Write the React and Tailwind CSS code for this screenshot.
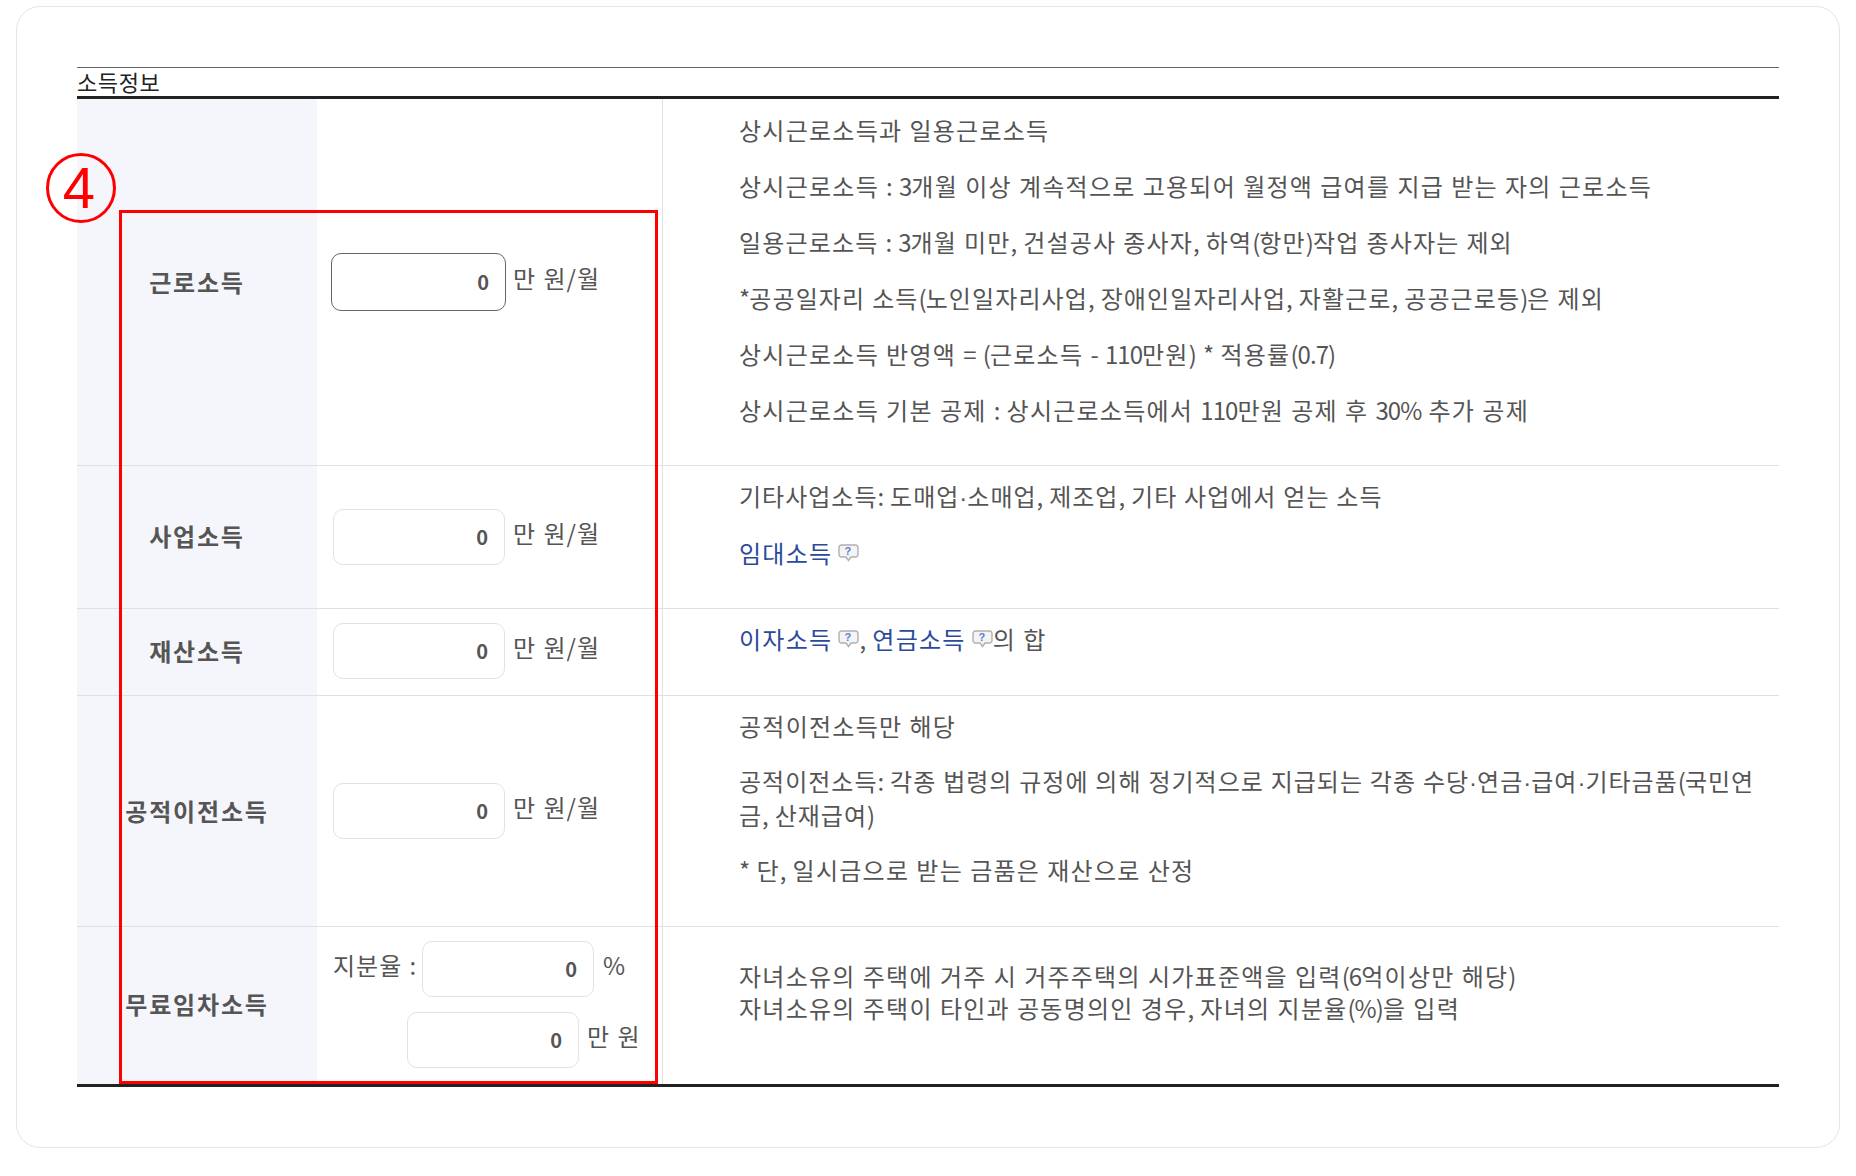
const font = { fontFamily: '"Noto Sans CJK KR", sans-serif' };

// Latin and punctuation run narrower than hangul in the reference
function Txt({ children }) {
  return children.split(/([^\uAC00-\uD7A3\s]+)/).map((part, i) => {
    if (i % 2 === 0) return part;
    if (part === '·') {
      return <span key={i} className="tracking-normal" style={{ fontFamily: '"Liberation Sans", sans-serif' }}>·</span>;
    }
    return <span key={i} className="tracking-[-0.95px]">{part}</span>;
  });
}

function HelpIcon() {
  return (
    <svg width="21" height="18" viewBox="0 0 21 18" className="inline-block align-[1px] -ml-[1px]">
      <path d="M3.5 1h14a2.5 2.5 0 0 1 2.5 2.5v7a2.5 2.5 0 0 1-2.5 2.5h-4.5l-2.5 3.5-2.5-3.5h-4.5a2.5 2.5 0 0 1-2.5-2.5v-7a2.5 2.5 0 0 1 2.5-2.5z" fill="#f4f4f4" stroke="#b0b0b0" strokeWidth="1.4" />
      <text x="10.5" y="11" textAnchor="middle" fontSize="11" fontWeight="700" fill="#5b7fd6" fontFamily="Liberation Sans, sans-serif">?</text>
    </svg>
  );
}

function Field({ focused, className = '' }) {
  return (
    <div
      className={`flex items-center justify-end pr-[16px] rounded-[10px] border bg-white text-[20px] font-bold text-[#555] ${focused ? 'w-[175px] h-[58px] border-[#666] -ml-[1px]' : 'w-[172px] h-[56px] border-[#e2e2e2]'} ${className}`}
    >
      0
    </div>
  );
}

function Unit({ children, className = '' }) {
  return <span className={`text-[24px] leading-[32px] tracking-[1px] [word-spacing:1px] text-[#555] -translate-y-[4px] ${className}`}>{children}</span>;
}

function Link({ children }) {
  return <span className="text-[#2b4a9b]">{children}</span>;
}

function Row({ label, height, last, labelClass = '', fieldClass = '', children, notes }) {
  return (
    <div className={`flex ${height} ${last ? '' : 'border-b border-[#e0e0e0]'}`}>
      <div className={`w-[240px] shrink-0 bg-[#f5f6fc] flex items-center justify-center text-[24px] font-bold tracking-[1.8px] text-[#555] ${labelClass}`}>{label}</div>
      <div className={`w-[346px] shrink-0 border-r border-[#e0e0e0] pl-[15px] flex flex-col justify-center ${fieldClass}`}>{children}</div>
      <div className="flex-1 pl-[76px] text-[24px] leading-[32px] text-[#555] tracking-[1.25px] [word-spacing:0.5px]">{notes}</div>
    </div>
  );
}

export default function App() {
  return (
    <div className="w-[1856px] h-[1176px] bg-white pt-[6px] pl-[16px]" style={font}>
      <div className="relative w-[1824px] h-[1142px] border border-[#e5e5e5] rounded-[24px] pt-[60px] pl-[60px]">
        <div className="w-[1702px]">
          <div className="border-t border-[#666] h-[29px] text-[22px] leading-[26px] tracking-[0.6px] text-[#222]">소득정보</div>
          <div className="border-y-[3px] border-[#222]">
            <Row
              label="근로소득"
              height="h-[367px]"
              notes={
                <div className="pt-[15px] flex flex-col gap-[24px]">
                  <p><Txt>상시근로소득과 일용근로소득</Txt></p>
                  <p><Txt>상시근로소득 : 3개월 이상 계속적으로 고용되어 월정액 급여를 지급 받는 자의 근로소득</Txt></p>
                  <p className="tracking-[1.15px]"><Txt>일용근로소득 : 3개월 미만, 건설공사 종사자, 하역(항만)작업 종사자는 제외</Txt></p>
                  <p className="tracking-[1.1px]"><Txt>*공공일자리 소득(노인일자리사업, 장애인일자리사업, 자활근로, 공공근로등)은 제외</Txt></p>
                  <p><Txt>상시근로소득 반영액 = (근로소득 - 110만원) * 적용률(0.7)</Txt></p>
                  <p><Txt>상시근로소득 기본 공제 : 상시근로소득에서 110만원 공제 후 30% 추가 공제</Txt></p>
                </div>
              }
            >
              <div className="flex items-center gap-[7px]">
                <Field focused />
                <Unit>만 원/월</Unit>
              </div>
            </Row>
            <Row
              label="사업소득"
              height="h-[143px]"
              labelClass="pb-[2px]"
              fieldClass="pb-[1px]"
              notes={
                <div className="pt-[14px] flex flex-col gap-[23px]">
                  <p className="tracking-[1px]"><Txt>기타사업소득: 도매업·소매업, 제조업, 기타 사업에서 얻는 소득</Txt></p>
                  <p><Link>임대소득</Link> <HelpIcon /></p>
                </div>
              }
            >
              <div className="flex items-center gap-[8px] pl-[1px]">
                <Field />
                <Unit>만 원/월</Unit>
              </div>
            </Row>
            <Row
              label="재산소득"
              height="h-[87px]"
              labelClass="pb-[3px]"
              fieldClass="pb-[2px]"
              notes={
                <p className="pt-[14px]">
                  <Link>이자소득</Link> <HelpIcon /><Txt>, </Txt><Link>연금소득</Link> <HelpIcon />의 합
                </p>
              }
            >
              <div className="flex items-center gap-[8px] pl-[1px]">
                <Field />
                <Unit>만 원/월</Unit>
              </div>
            </Row>
            <Row
              label="공적이전소득"
              height="h-[231px]"
              labelClass="pb-[1px]"
              notes={
                <div className="pt-[14px] flex flex-col gap-[23px]">
                  <p><Txt>공적이전소득만 해당</Txt></p>
                  <p className="tracking-[1px]"><Txt>공적이전소득: 각종 법령의 규정에 의해 정기적으로 지급되는 각종 수당·연금·급여·기타금품(국민연</Txt><br /><Txt>금, 산재급여)</Txt></p>
                  <p><Txt>* 단, 일시금으로 받는 금품은 재산으로 산정</Txt></p>
                </div>
              }
            >
              <div className="flex items-center gap-[8px] pl-[1px]">
                <Field />
                <Unit>만 원/월</Unit>
              </div>
            </Row>
            <Row
              label="무료임차소득"
              height="h-[157px]"
              labelClass="pb-[3px]"
              last
              notes={
                <div className="pt-[33px]">
                  <p><Txt>자녀소유의 주택에 거주 시 거주주택의 시가표준액을 입력(6억이상만 해당)</Txt></p>
                  <p><Txt>자녀소유의 주택이 타인과 공동명의인 경우, 자녀의 지분율(%)을 입력</Txt></p>
                </div>
              }
            >
              <div className="flex flex-col gap-[15px] -translate-y-[1px]">
                <div className="flex items-center pl-[1px]">
                  <Unit className="w-[89px]">지분율 :</Unit>
                  <Field />
                  <Unit className="ml-[9px] tracking-normal">%</Unit>
                </div>
                <div className="flex items-center pl-[75px]">
                  <Field />
                  <Unit className="ml-[8px]">만 원</Unit>
                </div>
              </div>
            </Row>
          </div>
        </div>

        {/* callout overlay */}
        <div className="absolute left-[29px] top-[146px] w-[70px] h-[70px] rounded-full border-[3px] border-[#f00] flex items-center justify-center pr-[4px] text-[58px] leading-none text-[#f00]" style={{ fontFamily: '"Liberation Sans", sans-serif' }}>4</div>
        <div className="absolute left-[102px] top-[203px] w-[539px] h-[874px] border-[3px] border-[#f00]" />
      </div>
    </div>
  );
}
